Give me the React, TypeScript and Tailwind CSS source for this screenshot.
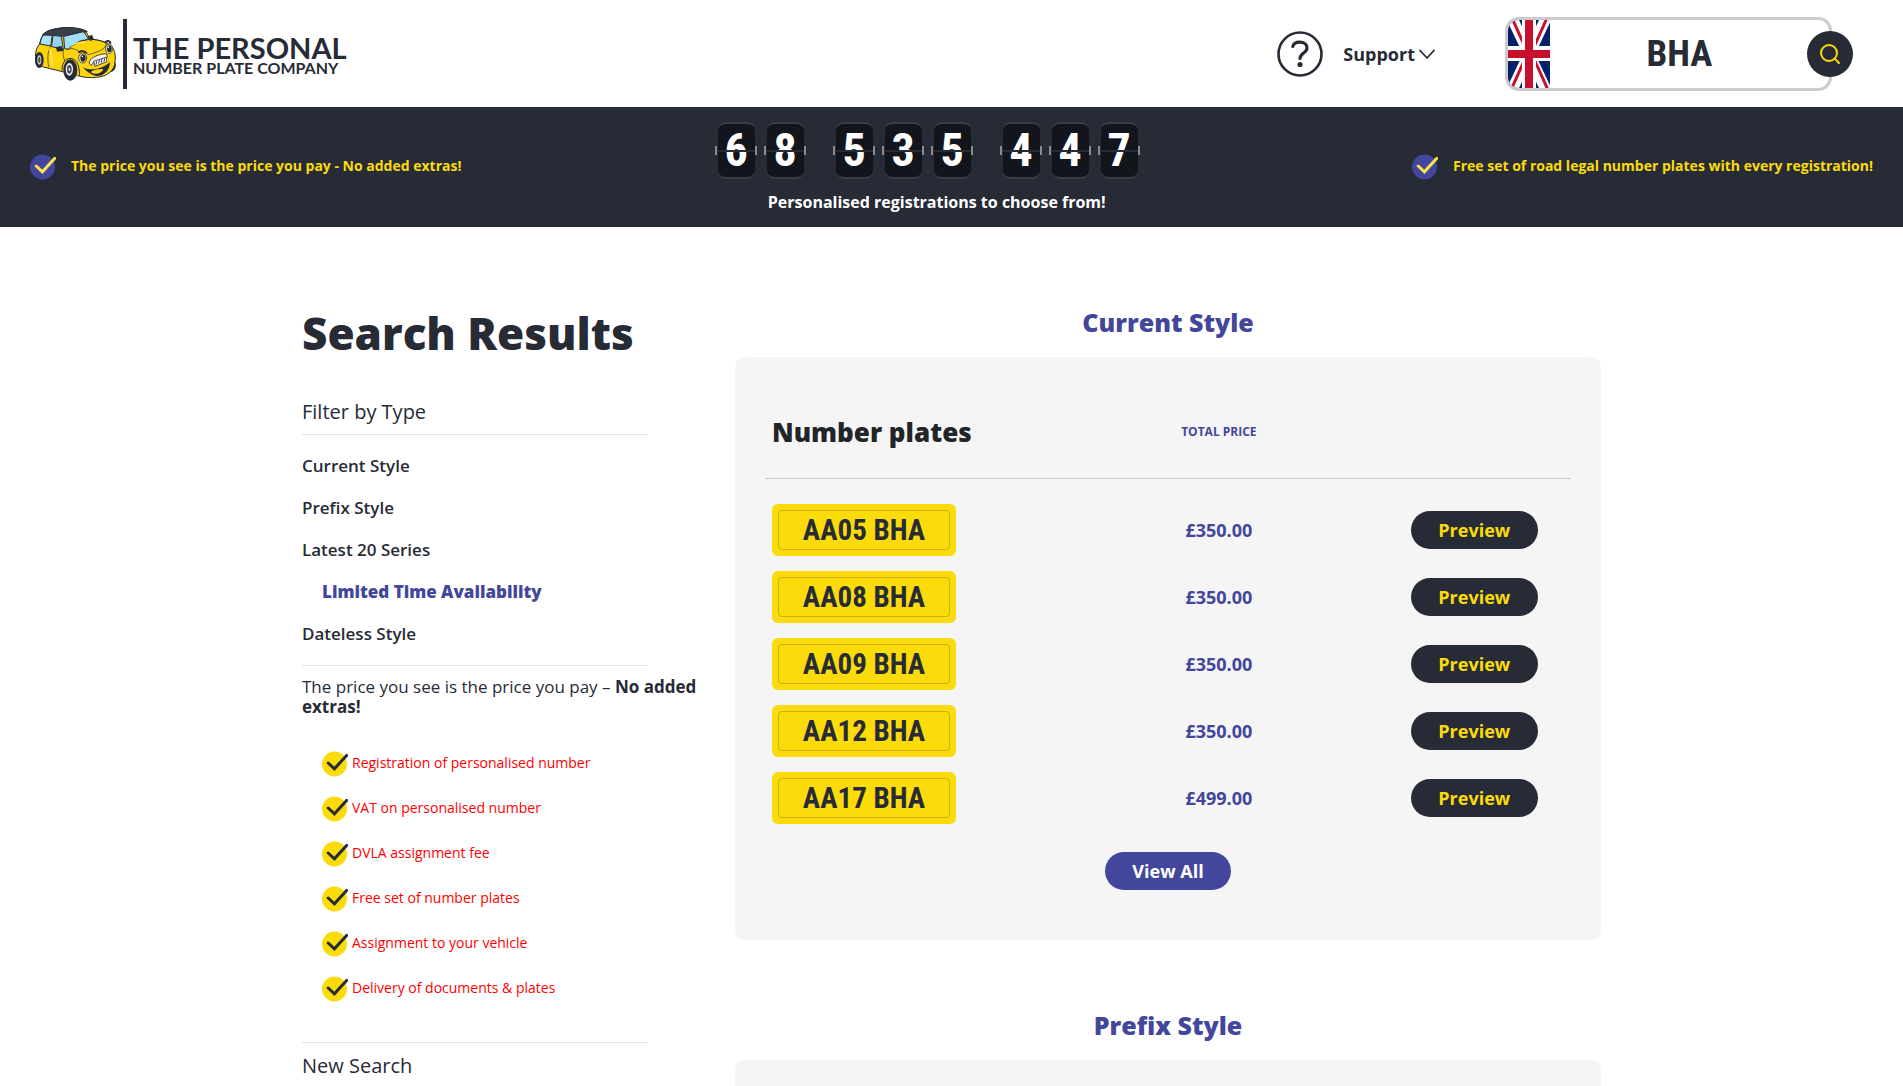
import { Search } from "lucide-react";

type Plate = { reg: string; price: string };

const counter = ["68", "535", "447"];

const filters = [
  { label: "Current Style" },
  { label: "Prefix Style" },
  { label: "Latest 20 Series" },
  { label: "Limited Time Availability", sub: true },
  { label: "Dateless Style" },
];

const extras = [
  "Registration of personalised number",
  "VAT on personalised number",
  "DVLA assignment fee",
  "Free set of number plates",
  "Assignment to your vehicle",
  "Delivery of documents & plates",
];

const currentPlates: Plate[] = [
  { reg: "AA05 BHA", price: "£350.00" },
  { reg: "AA08 BHA", price: "£350.00" },
  { reg: "AA09 BHA", price: "£350.00" },
  { reg: "AA12 BHA", price: "£350.00" },
  { reg: "AA17 BHA", price: "£499.00" },
];

function Tick({ circle, mark }: { circle: string; mark: string }) {
  return (
    <svg className="h-[26px] w-[26px] shrink-0" viewBox="0 0 26 26" aria-hidden="true">
      <circle cx="12.5" cy="13" r="12.5" fill={circle} />
      <path d="M6.2 12 12.4 17.8 24.6 4.4" fill="none" stroke={mark} strokeWidth="3" strokeLinecap="round" />
    </svg>
  );
}

function CarLogo() {
  return (
    <svg className="h-[54px] w-[81px] shrink-0" viewBox="105 85 243 162" aria-hidden="true">
      <g stroke="#272b36" strokeWidth="3" strokeLinejoin="round" strokeLinecap="round">
        <ellipse cx="334" cy="200" rx="12" ry="18" fill="#272b36" />
        <path
          d="M119 136C122 118 128 106 142 98 170 84 228 84 256 96L270 120C290 124 312 126 326 136 340 146 346 158 346 178L344 200C336 222 316 234 290 236 268 238 250 236 238 232L200 222 130 205 110 198C104 180 104 150 119 136Z"
          fill="#fbd50a"
        />
        <path d="M128 108C146 86 226 78 262 99L191 112Z" fill="#3b3f47" />
        <path d="M130 109 157 110 152 142 120 136C122 124 125 116 130 109Z" fill="#a9e0f8" />
        <path d="M160 110 184 113 190 152 156 144Z" fill="#8fd4f5" />
        <path d="M192 113 250 99C256 106 262 114 266 122L240 128C226 134 212 144 204 152L195 150Z" fill="#a3def8" />
        <path d="M152 142C142 162 142 180 146 204M190 152C188 164 190 176 194 186" fill="none" strokeWidth="2" />
        <path d="M204 152C216 148 228 150 238 160M238 128C268 118 300 122 318 134 320 150 300 158 266 168 256 160 246 156 236 158" fill="none" strokeWidth="2" />
        <path d="M186 214C186 188 200 176 216 180 232 184 240 206 238 232" fill="#fbd50a" />
      </g>
      <path d="M148 150C156 168 157 186 156 202" fill="none" stroke="#fff3a0" strokeWidth="3" />
      <path d="M214 142C226 132 242 130 254 130" fill="none" stroke="#fff3a0" strokeWidth="3" />
      <ellipse cx="118" cy="184" rx="13" ry="24" fill="#272b36" />
      <ellipse cx="118" cy="184" rx="6" ry="14" fill="#c9ccd1" />
      <ellipse cx="118" cy="184" rx="3" ry="9" fill="#3f434c" />
      <ellipse cx="211" cy="214" rx="21" ry="32" fill="#272b36" />
      <ellipse cx="208" cy="212" rx="11" ry="19" fill="#eceef0" />
      <ellipse cx="208" cy="212" rx="7" ry="13" fill="#4b4f59" />
      <ellipse cx="208" cy="212" rx="2" ry="5" fill="#fff" />
      <g stroke="#272b36" strokeWidth="2.5" strokeLinejoin="round">
        <path d="M268 190C272 176 300 164 320 166L322 176 281 190 274 200C269 198 267 194 268 190Z" fill="#f5f5f5" />
        <path d="M281 188 318 176 321 189 285 203Z" fill="#fff" />
        <ellipse cx="248" cy="178" rx="12" ry="15" fill="#fff7c4" />
        <ellipse cx="327" cy="150" rx="10" ry="14" fill="#fff7c4" />
      </g>
      <path d="M288 198 290 188M296 195 298 185M304 192 306 182M312 189 314 180" stroke="#272b36" strokeWidth="3" />
      <ellipse cx="249" cy="178" rx="8" ry="11" fill="#272b36" />
      <ellipse cx="328" cy="150" rx="7" ry="10" fill="#272b36" />
      <circle cx="247" cy="173" r="2.5" fill="#fff" />
      <circle cx="325" cy="146" r="2.5" fill="#fff" />
      <path d="M236 163C242 155 252 156 260 163M316 132C320 124 330 125 332 135" fill="none" stroke="#272b36" strokeWidth="6" />
      <path d="M248 206C270 218 306 212 330 190 330 214 312 234 288 232 276 230 264 222 248 206Z" fill="#272b36" />
      <path d="M272 220C284 212 300 210 310 212 304 226 284 230 272 220Z" fill="#fbd50a" />
      <path d="M169 146 184 143 189 156 172 158ZM264 114 276 110 280 122 270 126Z" fill="#272b36" stroke="#272b36" strokeWidth="2" strokeLinejoin="round" />
    </svg>
  );
}

function UnionFlag() {
  return (
    <svg className="h-[68px] w-[42px]" viewBox="0 0 42 68" aria-hidden="true">
      <path fill="#012169" d="M0 0h42v68H0z" />
      <path d="M4-2 38 70M38-2 4 70" stroke="#fff" strokeWidth="11" />
      <path d="M4-2 17 27M40 70 27 41M39-2 26 27M3 70 16 41" stroke="#c8102e" strokeWidth="3" />
      <path fill="#fff" d="M14 0h14v68H14zM0 26h42v15H0z" />
      <path fill="#c8102e" d="M17 0h8v68h-8zM0 30h42v8H0z" />
    </svg>
  );
}

function Digit({ value }: { value: string }) {
  return (
    <span className="relative flex h-[57px] w-[37px] items-center justify-center rounded-lg border-y-2 border-[#3a3d48] bg-[#13151d] font-['Roboto_Condensed',Roboto,sans-serif] text-[46px] leading-none font-bold text-white">
      {value}
      <span className="absolute inset-x-0 top-[26px] h-[2px] bg-[#272b36]" />
      <span className="absolute top-[22px] -left-[3px] h-[9px] w-[2px] bg-[#8b8b8b]" />
      <span className="absolute top-[22px] -right-[2px] h-[9px] w-[2px] bg-[#8b8b8b]" />
    </span>
  );
}

function Header() {
  return (
    <header className="flex h-[107px] items-center justify-between pr-[71px] pl-[35px]">
      <a href="#" className="flex items-center">
        <CarLogo />
        <span className="ml-[7px] h-[70px] w-1 bg-[#272b36]" />
        <span className="ml-[6px] flex flex-col pt-1 font-[Lato,sans-serif] whitespace-nowrap">
          <span className="text-[29px] leading-6 font-bold">THE PERSONAL</span>
          <span className="text-base leading-4 font-bold">NUMBER PLATE COMPANY</span>
        </span>
      </a>
      <div className="flex items-center gap-[70px]">
        <button type="button" className="flex items-center text-lg font-bold">
          <svg className="mr-5 h-[46px] w-[46px]" viewBox="0 0 46 46" fill="none" stroke="#272b36" aria-hidden="true">
            <circle cx="23" cy="23" r="21.5" strokeWidth="2.6" />
            <path d="M15.800 15.500c.6-3 3.600-4.300 7-4.300 4.300 0 7.200 2.300 7.200 5.800 0 5-7 5-7 10.500" strokeWidth="3.200" strokeLinecap="round" />
            <circle cx="23" cy="33.500" r="2.600" fill="#272b36" stroke="none" />
          </svg>
          Support
          <svg className="ml-1 h-4 w-4" viewBox="0 0 16 16" fill="none" stroke="#272b36" strokeWidth="1.8" strokeLinecap="round" strokeLinejoin="round" aria-hidden="true">
            <path d="m1 4.500 7 7.500 7-7.500" />
          </svg>
        </button>
        <form className="relative flex w-[327px] items-center rounded-[14px] border-[3px] border-[#cbcbcb]">
          <span className="shrink-0 overflow-hidden rounded-l-[11px]">
            <UnionFlag />
          </span>
          <input
            aria-label="Search registrations"
            defaultValue="BHA"
            className="w-full min-w-0 pr-5 text-center font-['Roboto_Condensed',Roboto,sans-serif] text-[37px] font-bold outline-none"
          />
          <button type="submit" aria-label="Search" className="absolute -right-6 flex h-[46px] w-[46px] items-center justify-center rounded-full bg-[#272b36] text-[#fbdb0a]">
            <Search className="h-6 w-6" strokeWidth={2} />
          </button>
        </form>
      </div>
    </header>
  );
}

function Promise({ text }: { text: string }) {
  return (
    <p className="flex items-center gap-[15px]">
      <Tick circle="#42479b" mark="#fde34b" />
      <span className="pb-[2px]">{text}</span>
    </p>
  );
}

function Banner() {
  return (
    <section className="flex h-[120px] items-center justify-between bg-[#272b36] px-[30px] text-sm font-bold text-[#fbdb0a]">
      <Promise text="The price you see is the price you pay - No added extras!" />
      <div className="flex flex-col items-center gap-[11px] pt-px">
        <div className="flex gap-8 pr-[18px]">
          {counter.map((group, i) => (
            <div key={i} className="flex gap-3">
              {group.split("").map((d, j) => (
                <Digit key={j} value={d} />
              ))}
            </div>
          ))}
        </div>
        <p className="text-base text-white">Personalised registrations to choose from!</p>
      </div>
      <Promise text="Free set of road legal number plates with every registration!" />
    </section>
  );
}

function Sidebar() {
  return (
    <aside>
      <h1 className="text-[44px] leading-[57px] font-extrabold">Search Results</h1>
      <h2 className="mt-9 w-4/5 border-b border-[#e2e3e4] pb-2 text-xl leading-7">Filter by Type</h2>
      <ul className="w-4/5 border-b border-[#e2e3e4] py-[10px] text-[17px]">
        {filters.map((f) => (
          <li key={f.label} className="leading-[42px]">
            <a href="#" className={f.sub ? "pl-5 font-extrabold text-[#42479b]" : "font-semibold"}>
              {f.label}
            </a>
          </li>
        ))}
      </ul>
      <p className="pt-[11px] text-[17px] leading-5">
        The price you see is the price you pay – <strong>No added extras!</strong>
      </p>
      <ul className="mt-6 w-4/5 border-b border-[#e2e3e4] pb-[31px] pl-5">
        {extras.map((e) => (
          <li key={e} className="flex h-[45px] items-center gap-1 text-sm text-[#f00]">
            <Tick circle="#fbdb0a" mark="#272b36" />
            <span className="pb-[2px]">{e}</span>
          </li>
        ))}
      </ul>
      <h2 className="pt-[9px] text-xl leading-7">New Search</h2>
    </aside>
  );
}

function PlateTable({ plates }: { plates: Plate[] }) {
  return (
    <table className="w-full table-fixed">
      <thead>
        <tr className="h-[91px] border-b border-[#c9caca]">
          <th className="w-[37%] pl-[7px] text-left text-[26px] font-extrabold text-[#212529]">Number plates</th>
          <th className="w-[39%] pr-[3px] text-xs font-bold text-[#42479b]">TOTAL PRICE</th>
          <th className="w-[24%]" aria-label="Preview" />
        </tr>
      </thead>
      <tbody>
        <tr className="h-[18px]" />
        {plates.map((p) => (
          <tr key={p.reg} className="h-[67px]">
            <td>
              <div className="ml-[7px] w-[184px] rounded-md bg-[#fbdb0a] p-[6px]">
                <div className="rounded border border-[#c9af10] font-['Roboto_Condensed',Roboto,sans-serif] text-[29px] leading-[38px] font-bold">
                  {p.reg}
                </div>
              </div>
            </td>
            <td className="pr-[3px] text-lg font-bold text-[#42479b]">{p.price}</td>
            <td>
              <button type="button" className="h-[38px] w-[127px] rounded-full bg-[#272b36] text-lg font-bold text-[#fbdb0a]">
                Preview
              </button>
            </td>
          </tr>
        ))}
      </tbody>
    </table>
  );
}

function StyleSection({ title, plates = [] }: { title: string; plates?: Plate[] }) {
  return (
    <section className="mb-[68px] text-center">
      <h2 className="mb-[18px] text-[25px] leading-[34px] font-extrabold text-[#42479b]">{title}</h2>
      <div className="rounded-[10px] bg-[#f5f5f5] px-[30px] pt-[30px] pb-[50px]">
        {plates.length > 0 && (
          <>
            <PlateTable plates={plates} />
            <button type="button" className="mt-[21px] h-[38px] w-[126px] rounded-full bg-[#42479b] text-lg font-bold text-white">
              View All
            </button>
          </>
        )}
      </div>
    </section>
  );
}

export default function App() {
  return (
    <div className="h-screen overflow-hidden bg-white font-['Open_Sans',sans-serif] text-[#272b36]">
      <Header />
      <Banner />
      <main className="mx-auto grid max-w-[1299px] grid-cols-3 pt-[78px]">
        <Sidebar />
        <div className="col-span-2">
          <StyleSection title="Current Style" plates={currentPlates} />
          <StyleSection title="Prefix Style" />
        </div>
      </main>
    </div>
  );
}
